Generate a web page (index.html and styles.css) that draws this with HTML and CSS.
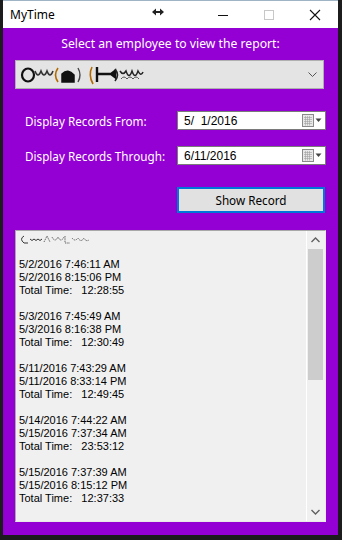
FILE: index.html
```html
<!DOCTYPE html>
<html lang="en">
<head>
  <meta charset="UTF-8">
  <meta name="viewport" content="width=device-width, initial-scale=1.0">
  <title>MyTime</title>
  <link rel="stylesheet" href="styles.css">
</head>
<body>
  <div class="window">
    <div class="titlebar">
      <span class="title">MyTime</span>
      <svg class="move-icon" width="12" height="8" viewBox="0 0 12 8">
        <path d="M0 4 L4 0.5 V3 H8 V0.5 L12 4 L8 7.5 V5 H4 V7.5 Z" fill="#222"/>
      </svg>
      <div class="caption-buttons">
        <svg width="12" height="12" viewBox="0 0 12 12"><path d="M1 6.5 H11" stroke="#111" stroke-width="1"/></svg>
        <svg width="12" height="12" viewBox="0 0 12 12"><rect x="1.5" y="1.5" width="9" height="9" fill="none" stroke="#c8c8c8"/></svg>
        <svg width="12" height="12" viewBox="0 0 12 12"><path d="M1 1 L11 11 M11 1 L1 11" stroke="#111" stroke-width="1.1"/></svg>
      </div>
    </div>

    <div class="content">
      <h1>Select an employee to view the report:</h1>

      <div class="combo">
        <svg class="scramble" width="128" height="22" viewBox="0 0 128 22">
          <ellipse cx="8" cy="11" rx="6" ry="6.5" fill="none" stroke="#111" stroke-width="2.2"/>
          <path d="M15 7 q3 8 6 0 q3 8 6 0 q3 8 6 0" fill="none" stroke="#333" stroke-width="1.6"/>
          <path d="M38 4 q-5 7 0 14" fill="none" stroke="#b36b00" stroke-width="1.6"/>
          <path d="M42 10 q6 -6 12 1 v7 h-12 z" fill="#111" stroke="#111" stroke-width="1.5"/>
          <path d="M58 4 q4 7 0 14" fill="none" stroke="#444" stroke-width="1.4"/>
          <path d="M72 3 q-4 8 1 17" fill="none" stroke="#b36b00" stroke-width="1.6"/>
          <path d="M77 3 v15 M77 10 h14 l4 -3 v6 l-4 -3 h-14" fill="#111" stroke="#111" stroke-width="2.4"/>
          <path d="M95 5 q5 6 0 12" fill="none" stroke="#222" stroke-width="1.6"/>
          <path d="M100 7 q3 5 6 0 q3 9 6 0 q3 9 6 0 q3 6 5 1" fill="none" stroke="#222" stroke-width="1.5"/>
          <path d="M101 15 q3 -4 6 0 q3 -4 6 0 q3 -4 6 0" fill="none" stroke="#555" stroke-width="1"/>
        </svg>
        <svg class="chevron" width="9" height="6" viewBox="0 0 9 6"><path d="M0.5 0.5 L4.5 4.5 L8.5 0.5" fill="none" stroke="#555"/></svg>
      </div>

      <div class="field-row">
        <label>Display Records From:</label>
        <div class="datebox">
          <span>5/&nbsp;&nbsp;1/2016</span>
          <span class="cal">
            <svg width="20" height="13" viewBox="0 0 20 13">
              <rect x="0.5" y="0.5" width="11" height="12" fill="#e8e8e8" stroke="#8a8a8a"/>
              <path d="M2 3.5 h8 M2 5.5 h8 M2 7.5 h8 M2 9.5 h8 M3.5 2 v9.5 M5.5 2 v9.5 M7.5 2 v9.5" stroke="#a0a0a0" stroke-width="0.6"/>
              <path d="M13.5 4.5 L19.5 4.5 L16.5 8 Z" fill="#444"/>
            </svg>
          </span>
        </div>
      </div>

      <div class="field-row">
        <label>Display Records Through:</label>
        <div class="datebox">
          <span>6/11/2016</span>
          <span class="cal">
            <svg width="20" height="13" viewBox="0 0 20 13">
              <rect x="0.5" y="0.5" width="11" height="12" fill="#e8e8e8" stroke="#8a8a8a"/>
              <path d="M2 3.5 h8 M2 5.5 h8 M2 7.5 h8 M2 9.5 h8 M3.5 2 v9.5 M5.5 2 v9.5 M7.5 2 v9.5" stroke="#a0a0a0" stroke-width="0.6"/>
              <path d="M13.5 4.5 L19.5 4.5 L16.5 8 Z" fill="#444"/>
            </svg>
          </span>
        </div>
      </div>

      <div class="button-row">
        <button class="show-button">Show Record</button>
      </div>

      <div class="listbox">
        <div class="list-text">
          <svg class="scramble-small" width="72" height="11" viewBox="0 0 72 11">
            <path d="M5 2 q-5 3 0 7 h4 M11 5 q2 3 4 0 q2 3 4 0 q2 3 4 0" fill="none" stroke="#333" stroke-width="1"/>
            <path d="M25 8 l3 -6 l3 6 M33 3 q3 6 6 0 q3 6 6 0 M46 2 v7 h5 M53 4 q3 4 6 0 q3 5 6 0 q2 4 5 2" fill="none" stroke="#666" stroke-width="1" stroke-dasharray="1.5 0.8"/>
          </svg>
          <div>&nbsp;</div>
          <div>5/2/2016 7:46:11 AM</div>
          <div>5/2/2016 8:15:06 PM</div>
          <div>Total Time:&nbsp;&nbsp; 12:28:55</div>
          <div>&nbsp;</div>
          <div>5/3/2016 7:45:49 AM</div>
          <div>5/3/2016 8:16:38 PM</div>
          <div>Total Time:&nbsp;&nbsp; 12:30:49</div>
          <div>&nbsp;</div>
          <div>5/11/2016 7:43:29 AM</div>
          <div>5/11/2016 8:33:14 PM</div>
          <div>Total Time:&nbsp;&nbsp; 12:49:45</div>
          <div>&nbsp;</div>
          <div>5/14/2016 7:44:22 AM</div>
          <div>5/15/2016 7:37:34 AM</div>
          <div>Total Time:&nbsp;&nbsp; 23:53:12</div>
          <div>&nbsp;</div>
          <div>5/15/2016 7:37:39 AM</div>
          <div>5/15/2016 8:15:12 PM</div>
          <div>Total Time:&nbsp;&nbsp; 12:37:33</div>
        </div>
        <div class="scrollbar">
          <svg class="arrow" width="9" height="6" viewBox="0 0 9 6"><path d="M0.5 5 L4.5 1 L8.5 5" fill="none" stroke="#606060" stroke-width="1.4"/></svg>
          <div class="track">
            <div class="thumb"></div>
          </div>
          <svg class="arrow" width="9" height="6" viewBox="0 0 9 6"><path d="M0.5 1 L4.5 5 L8.5 1" fill="none" stroke="#606060" stroke-width="1.4"/></svg>
        </div>
      </div>
    </div>
  </div>
</body>
</html>
```

FILE: styles.css
```css
body {
  margin: 0;
  padding: 0;
  background-color: #1c1c1c;
  font-family: "Noto Sans", "Liberation Sans", sans-serif;
}

.window {
  width: 335px;
  height: 535px;
  margin-left: 3px;
  background-color: #9400d3;
  display: flex;
  flex-direction: column;
}

.titlebar {
  height: 28px;
  background-color: #fff;
  border-top: 1px solid #9fb4c4;
  box-sizing: border-box;
  display: flex;
  align-items: center;
}

.title {
  margin-left: 7px;
  font-size: 12px;
  color: #000;
}

.move-icon {
  margin-left: 97px;
  margin-top: -5px;
}

.caption-buttons {
  margin-left: auto;
  display: flex;
  gap: 34px;
  margin-right: 17px;
}

.content {
  flex: 1;
  display: flex;
  flex-direction: column;
  padding: 7px 12px 12px 12px;
}

h1 {
  margin: 0 0 7px 0;
  font-size: 12.2px;
  font-weight: normal;
  color: #fff;
  text-align: center;
  line-height: 18px;
}

.combo {
  width: 309px;
  height: 29px;
  box-sizing: border-box;
  border: 1px solid #b0b0b0;
  background-color: #e4e4e4;
  display: flex;
  align-items: center;
  padding-left: 4px;
  padding-right: 6px;
}

.chevron {
  margin-left: auto;
}

.field-row {
  display: flex;
  align-items: center;
  margin-top: 22px;
  height: 19px;
}

.field-row + .field-row {
  margin-top: 16px;
}

.field-row label {
  margin-left: 10px;
  color: #fff;
  font-size: 11.7px;
}

.datebox {
  margin-left: auto;
  width: 149px;
  height: 19px;
  box-sizing: border-box;
  background-color: #fff;
  border: 1px solid #7a7a7a;
  display: flex;
  align-items: center;
  padding-left: 6px;
  font-family: "Liberation Sans", Arial, sans-serif;
  font-size: 12px;
  color: #000;
}

.cal {
  margin-left: auto;
  margin-right: 3px;
  display: flex;
}

.button-row {
  display: flex;
  justify-content: flex-end;
  margin-top: 22px;
  padding-right: 1px;
}

.show-button {
  width: 148px;
  height: 26px;
  box-sizing: border-box;
  border: 2px solid #0078d7;
  background-color: #e1e1e1;
  font-family: "Noto Sans", "Liberation Sans", sans-serif;
  font-size: 11.7px;
  color: #000;
  padding: 0;
}

.listbox {
  margin-top: 17px;
  width: 311px;
  height: 292px;
  box-sizing: border-box;
  border: 1px solid #a8a8a8;
  border-right-color: #e8e8e8;
  border-bottom-color: #e8e8e8;
  background-color: #f0f0f0;
  display: flex;
}

.list-text {
  flex: 1;
  padding: 2px 0 0 3px;
  font-family: "Liberation Sans", Arial, sans-serif;
  font-size: 11px;
  line-height: 13px;
  color: #000;
  overflow: hidden;
  white-space: nowrap;
}

.scramble-small {
  display: block;
  margin-top: 1px;
}

.scrollbar {
  width: 17px;
  margin-right: 1px;
  border-left: 1px solid #fff;
  display: flex;
  flex-direction: column;
  align-items: center;
}

.arrow {
  margin: 6px 0;
}

.track {
  flex: 1;
  width: 100%;
  padding: 0 1px;
  box-sizing: border-box;
}

.thumb {
  height: 131px;
  background-color: #cdcdcd;
}
```
